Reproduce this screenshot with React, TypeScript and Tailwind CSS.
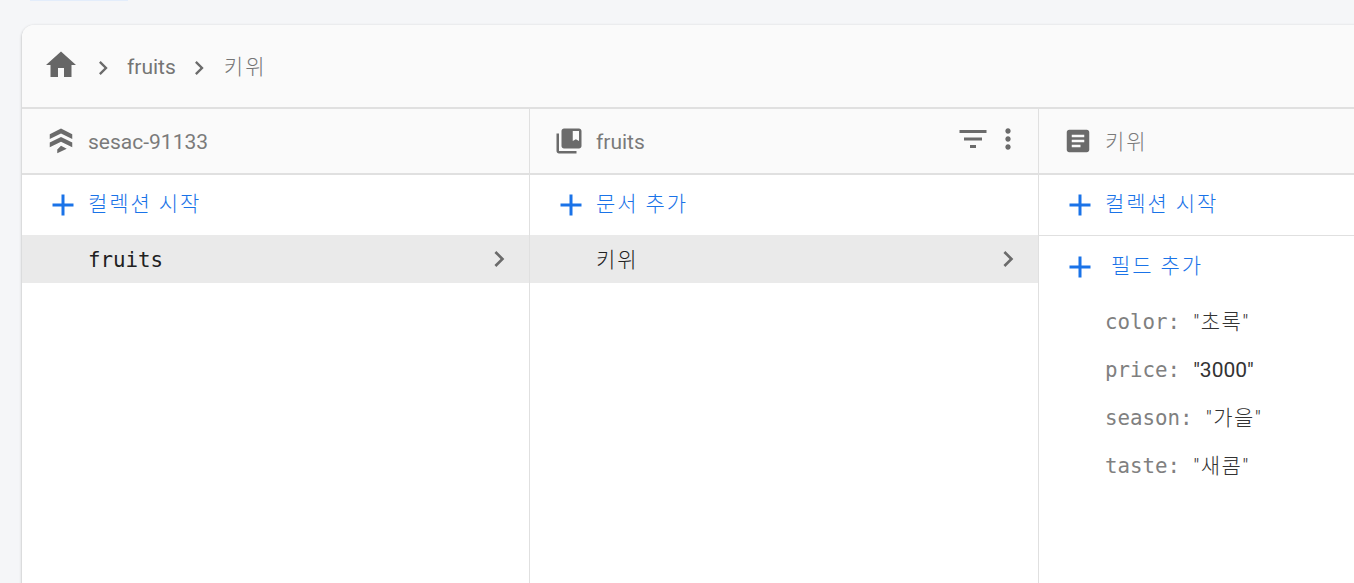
const SANS = "font-['Roboto','Noto_Sans_CJK_KR',sans-serif]";
const MONO = "font-['DejaVu_Sans_Mono','Noto_Sans_CJK_KR',monospace]";

const paths = {
  home: "M10 20v-6h4v6h5v-8h3L12 3 2 12h3v8z",
  chevron: "M10 6L8.59 7.41 13.17 12l-4.58 4.59L10 18l6-6z",
  collections:
    "M4 6H2v14c0 1.1.9 2 2 2h14v-2H4V6z M20 2H8c-1.1 0-2 .9-2 2v12c0 1.1.9 2 2 2h12c1.1 0 2-.9 2-2V4c0-1.1-.9-2-2-2zm0 10l-2.5-1.5L15 12V4h5v8z",
  filter: "M10 18h4v-2h-4v2zM3 6v2h18V6H3zm3 7h12v-2H6v2z",
  more: "M12 8c1.1 0 2-.9 2-2s-.9-2-2-2-2 .9-2 2 .9 2 2 2zm0 2c-1.1 0-2 .9-2 2s.9 2 2 2 2-.9 2-2-.9-2-2-2zm0 6c-1.1 0-2 .9-2 2s.9 2 2 2 2-.9 2-2-.9-2-2-2z",
  article:
    "M19 3H5c-1.1 0-2 .9-2 2v14c0 1.1.9 2 2 2h14c1.1 0 2-.9 2-2V5c0-1.1-.9-2-2-2zm-5 14H7v-2h7v2zm3-4H7v-2h10v2zm0-4H7V7h10v2z",
  add: "M19 13h-6v6h-2v-6H5v-2h6V5h2v6h6v2z",
  stack: "M12 2l9 4.6v3.8L12 6 3 10.4V6.6z M12 8.8l9 4.4v3.8l-9-4.4-9 4.4v-3.8z M12 15.8l4.6 2.3L9 21.8v-3z",
};

function Icon({ d, className }: { d: string; className: string }) {
  return (
    <svg viewBox="0 0 24 24" className={`shrink-0 fill-current ${className}`}>
      <path d={d} />
    </svg>
  );
}

function AddRow({ label, gap, height }: { label: string; gap: string; height: string }) {
  return (
    <div className={`flex items-center pl-[23px] text-[21px] font-light tracking-[1.9px] text-[#1a73e8] ${height}`}>
      <Icon d={paths.add} className="h-9 w-9 text-[#1a73e8]" />
      <span className={gap}>{label}</span>
    </div>
  );
}

function ColHeader({ icon, label, pad, spacing, children }: { icon: string; label: string; pad: string; spacing: string; children?: React.ReactNode }) {
  return (
    <div className={`flex h-[66px] items-center border-b-2 border-[#e0e0e0] bg-[#fafafa] text-[21px] text-[#7a7a7a] ${pad}`}>
      <Icon d={icon} className="h-[30px] w-[30px] text-[#6b6b6b]" />
      <span className={`ml-[12px] pt-[4px] ${spacing}`}>{label}</span>
      {children}
    </div>
  );
}

function SelectedRow({ label, mono }: { label: string; mono?: boolean }) {
  return (
    <div className="flex h-12 items-center justify-between bg-[#eaeaea] pl-[66px] pr-[14px] text-[21px] text-[#212121]">
      <span className={mono ? `${MONO} pt-[3px] text-[20.8px] font-light` : "pt-[3px] font-light tracking-[2px]"}>{label}</span>
      <Icon d={paths.chevron} className="h-8 w-8 text-[#6b6b6b]" />
    </div>
  );
}

const fields = [
  { name: "color:", value: '"초록"', cjk: true },
  { name: "price:", value: '"3000"', cjk: false },
  { name: "season:", value: '"가을"', cjk: true },
  { name: "taste:", value: '"새콤"', cjk: true },
];

export default function App() {
  return (
    <div className={`h-[583px] overflow-hidden bg-[#f5f6f8] ${SANS}`}>
      <div className="ml-[30px] h-px w-[98px] bg-[#e3edfb]" />
      <div className="ml-[22px] mt-6 h-[600px] w-[1340px] overflow-hidden rounded-tl-xl bg-white shadow-[0_1px_3px_rgba(0,0,0,0.3)]">
        {/* breadcrumb */}
        <div className="flex h-[84px] items-center border-b-2 border-[#e0e0e0] bg-[#fafafa] pl-[21px] pt-[3px] text-[21px] text-[#757575]">
          <Icon d={paths.home} className="mb-[6px] h-9 w-9 text-[#666666]" />
          <Icon d={paths.chevron} className="ml-[10px] h-7 w-7 text-[#6b6b6b]" />
          <span className="ml-[10px]">fruits</span>
          <Icon d={paths.chevron} className="ml-[9px] h-7 w-7 text-[#6b6b6b]" />
          <span className="ml-[11px] font-light tracking-[2px]">키위</span>
        </div>

        <div className="grid h-full grid-cols-[508px_509px_1fr]">
          <div className="border-r border-[#e0e0e0]">
            <ColHeader icon={paths.stack} label="sesac-91133" pad="pl-6" spacing="" />
            <AddRow label="컬렉션 시작" gap="ml-[7px]" height="h-[60px]" />
            <SelectedRow label="fruits" mono />
          </div>

          <div className="border-r border-[#e0e0e0]">
            <ColHeader icon={paths.collections} label="fruits" pad="pl-[24px] pr-[14px]" spacing="">
              <Icon d={paths.filter} className="mb-[4px] ml-auto h-9 w-9 text-[#6b6b6b]" />
              <Icon d={paths.more} className="mb-[4px] ml-[1px] h-8 w-8 text-[#6b6b6b]" />
            </ColHeader>
            <AddRow label="문서 추가" gap="ml-[7px]" height="h-[60px]" />
            <SelectedRow label="키위" />
          </div>

          <div>
            <ColHeader icon={paths.article} label="키위" pad="pl-6" spacing="font-light tracking-[2px]" />
            <AddRow label="컬렉션 시작" gap="ml-[7px]" height="h-[61px] border-b border-[#e0e0e0]" />
            <AddRow label="필드 추가" gap="ml-[13px]" height="h-[62px]" />
            <div className="mt-px flex flex-col pl-[66px] text-[21px]">
              {fields.map((f) => (
                <div key={f.name} className="flex h-12 items-center">
                  <span className={`${MONO} text-[20.8px] font-light text-[#808080]`}>{f.name}</span>
                  <span className={`ml-[13px] text-[#333333] ${f.cjk ? "font-light tracking-[1.5px]" : ""}`}>{f.value}</span>
                </div>
              ))}
            </div>
          </div>
        </div>
      </div>
    </div>
  );
}
